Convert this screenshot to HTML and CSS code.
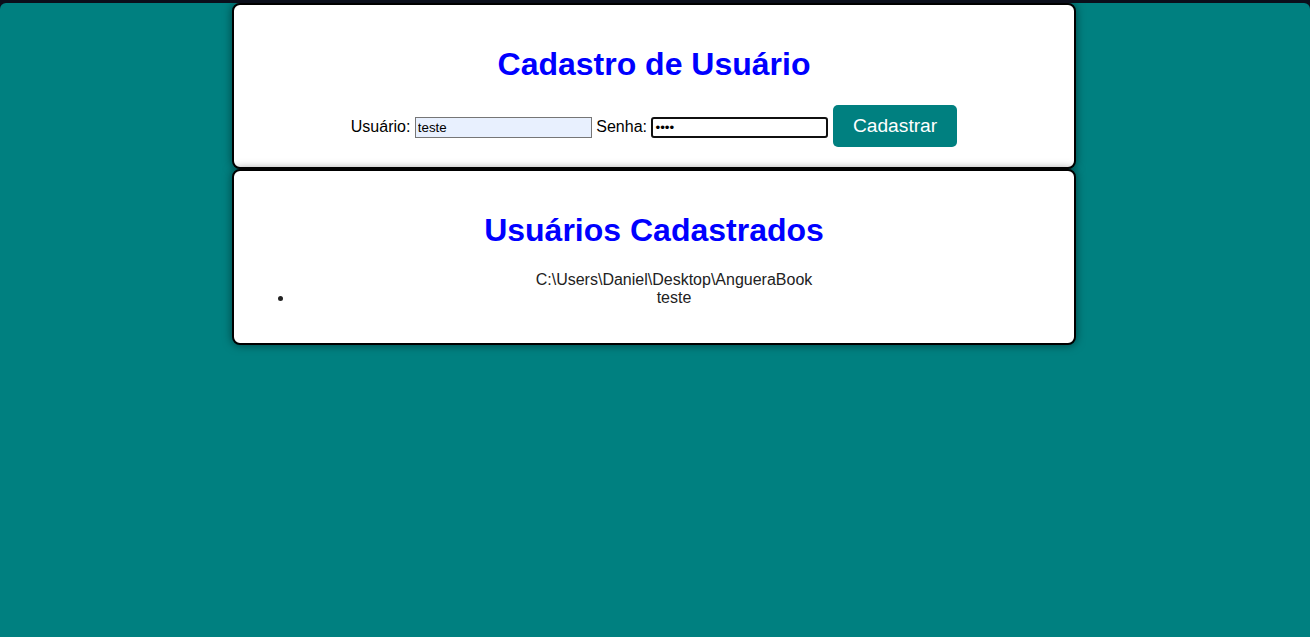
FILE: index.html
```html
<!DOCTYPE html>
<html lang="pt-BR">
<head>
<meta charset="utf-8">
<title>Cadastro de Usuário</title>
<link rel="stylesheet" href="styles.css">
</head>
<body>
  <div class="card">
    <h1 class="title">Cadastro de Usuário</h1>
    <form class="form">
      <label class="label">Usuário:</label>
      <input class="input input-user" type="text" value="teste">
      <label class="label">Senha:</label>
      <input class="input input-pass" type="password" value="1234">
      <button class="btn" type="button">Cadastrar</button>
    </form>
  </div>
  <div class="card">
    <h1 class="title">Usuários Cadastrados</h1>
    <ul class="list">
      <li class="item"><span class="entry">C:\Users\Daniel\Desktop\AngueraBook<br>teste</span></li>
    </ul>
  </div>
</body>
</html>
```
FILE: styles.css
```css
html {
  background: #0b0f1b;
  padding-top: 3px;
}
body {
  margin: 0;
  min-height: calc(100vh - 3px);
  background: #008080;
  border-radius: 6px 6px 0 0;
  font-family: "Liberation Sans", Arial, sans-serif;
  font-size: 16px;
  color: #000;
}
.card {
  width: 800px;
  margin: 0 0 0 calc(50% - 423px);
  padding: 20px;
  background: #fff;
  border: 2px solid #000;
  border-radius: 8px;
  box-shadow: 0 0 10px rgba(0, 0, 0, 0.5);
  text-align: center;
}
.title {
  font-size: 32px;
  font-weight: bold;
  color: #0000ff;
  margin: 21.44px 0;
}
.form {
  margin: 0;
}
.label {
  font-size: 16px;
}
.input {
  box-sizing: border-box;
  width: 177px;
  height: 21px;
  font-family: "Liberation Sans", Arial, sans-serif;
  font-size: 13.33px;
  padding: 1px 2px;
  vertical-align: baseline;
}
.input-user {
  background: #e8f0fe;
  border: 1px solid #767676;
  color: #000;
}
.input-pass {
  background: #fff;
  border: 2px solid #101010;
  border-radius: 3px;
  outline: none;
}
.btn {
  background: #008080;
  color: #fff;
  border: none;
  border-radius: 5px;
  padding: 10px 20px;
  font-family: "Liberation Sans", Arial, sans-serif;
  font-size: 19.2px;
}
.list {
  margin: 16px 0;
  padding-left: 40px;
}
.item {
  text-align: center;
  color: #222;
}
.entry {
  display: inline-block;
}
```
